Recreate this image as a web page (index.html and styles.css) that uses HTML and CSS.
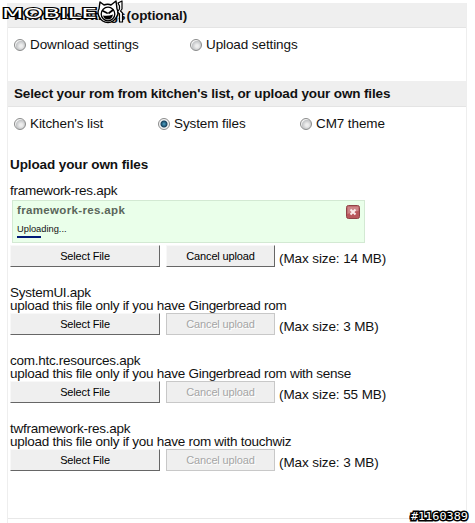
FILE: index.html
```
<!DOCTYPE html>
<html lang="en">
<head>
    <meta charset="UTF-8">
    <meta name="viewport" content="width=device-width, initial-scale=1.0">
    <title>Kitchen</title>
    <link rel="stylesheet" href="styles.css">
</head>
<body>
    <div class="container">
        <h2 class="top">Kitchen's settings (optional)</h2>
        <div class="options settings">
            <label><input type="radio" name="settings">Download settings</label>
            <label><input type="radio" name="settings">Upload settings</label>
        </div>

        <h2 class="second">Select your rom from kitchen's list, or upload your own files</h2>
        <div class="options source">
            <label><input type="radio" name="source">Kitchen's list</label>
            <label><input type="radio" name="source" checked>System files</label>
            <label><input type="radio" name="source">CM7 theme</label>
        </div>

        <div class="uploads">
            <h3>Upload your own files</h3>

            <div class="file first">
                <p>framework-res.apk</p>
                <div class="progress">
                    <div>
                        <b>framework-res.apk</b>
                        <span class="status">Uploading...</span>
                        <div class="bar"></div>
                    </div>
                    <svg class="close" width="14" height="14" viewBox="0 0 14 14">
                        <rect x="0.5" y="0.5" width="13" height="13" rx="2" fill="#b9575c" stroke="#8f4246"/>
                        <path d="M1.5 1.5h11v4.5q-5 0-11 3z" fill="#cc8588"/>
                        <path d="M4.500 4.500l5 5M9.500 4.500l-5 5" stroke="#fbecec" stroke-width="2"/>
                    </svg>
                </div>
                <div class="buttons">
                    <button class="select">Select File</button>
                    <button class="cancel">Cancel upload</button>
                    <span>(Max size: 14 MB)</span>
                </div>
            </div>

            <div class="file">
                <p>SystemUI.apk</p>
                <p>upload this file only if you have Gingerbread rom</p>
                <div class="buttons">
                    <button class="select">Select File</button>
                    <button class="cancel" disabled>Cancel upload</button>
                    <span>(Max size: 3 MB)</span>
                </div>
            </div>

            <div class="file">
                <p>com.htc.resources.apk</p>
                <p>upload this file only if you have Gingerbread rom with sense</p>
                <div class="buttons">
                    <button class="select">Select File</button>
                    <button class="cancel" disabled>Cancel upload</button>
                    <span>(Max size: 55 MB)</span>
                </div>
            </div>

            <div class="file">
                <p>twframework-res.apk</p>
                <p>upload this file only if you have rom with touchwiz</p>
                <div class="buttons">
                    <button class="select">Select File</button>
                    <button class="cancel" disabled>Cancel upload</button>
                    <span>(Max size: 3 MB)</span>
                </div>
            </div>
        </div>
    </div>

    <svg class="logo" width="126" height="26" viewBox="0 0 126 26">
        <text class="wordmark" x="2" y="17.500" textLength="95" lengthAdjust="spacingAndGlyphs">MOBILE</text>
        <!-- mascot -->
        <g stroke-linejoin="round" stroke-linecap="round">
            <path d="M100 2l4 3q4-1.500 7 0l5-4 1 8q2 4 0 7-3 6.500-9 6.500t-9-6q-2-4 0-7.500z" fill="#fff" stroke="#000" stroke-width="1.400"/>
            <circle cx="108" cy="14" r="6.800" fill="#fff" stroke="#000" stroke-width="1.300"/>
            <path d="M103 11l4 2M113 10l-4 3" fill="none" stroke="#000" stroke-width="1.800"/>
            <path d="M103 15.500q5 1 10-1-1 5-5 5t-5-4z" fill="#000"/>
            <path d="M118 3l4-2v8l-1.500 2 2 2v9h-3v-8l-2-2 2-3V6z" fill="#fff" stroke="#000" stroke-width="1.200"/>
        </g>
    </svg>

    <svg class="watermark" width="62" height="14" viewBox="0 0 62 14">
        <text x="2" y="10.500" textLength="57" lengthAdjust="spacingAndGlyphs">#1160389</text>
    </svg>
</body>
</html>
```
FILE: styles.css
```
* {
    box-sizing: border-box;
    margin: 0;
    padding: 0;
}

body {
    position: relative;
    height: 523px;
    padding: 3px 8px 0 7px;
    overflow: hidden;
    background-color: #fff;
    color: #111;
    font-family: "Liberation Sans", Arial, sans-serif;
    font-size: 13.500px;
    letter-spacing: -0.1px;
}

.container {
    height: 520px;
    border-left: 1px solid #eee;
    border-right: 1px solid #eee;
}

h2 {
    height: 25px;
    padding-left: 6px;
    border-bottom: 1px solid #e4e4e4;
    background-color: #efefef;
    font-size: 13.500px;
    line-height: 25px;
    white-space: nowrap;
}

h2.top {
    word-spacing: -2.500px;
}

h2.second {
    height: 26px;
    line-height: 26px;
    letter-spacing: -0.13px;
}

.options {
    display: grid;
    padding-left: 6px;
}

.options label {
    display: flex;
    align-items: center;
    gap: 4px;
    height: 17px;
    white-space: nowrap;
}

.settings {
    grid-template-columns: 176px auto;
    height: 53px;
    padding-top: 8px;
}

.source {
    grid-template-columns: 144px 142px auto;
    height: 48px;
    padding-top: 8px;
}

input[type="radio"] {
    appearance: none;
    width: 12px;
    height: 12px;
    border: 1px solid #8a8b8b;
    border-radius: 50%;
    background: radial-gradient(circle at 60% 60%, #eee 15%, #c4c6c8 55%, #f4f4f4 66%);
}

input[type="radio"]:checked {
    background: radial-gradient(circle, #4fa5c8 0, #17435f 3px, #f4f4f4 4px);
}

.uploads {
    height: 364px;
    padding-left: 2px;
    border-bottom: 1px solid #e8e8e8;
}

h3 {
    height: 27px;
    font-size: 13.500px;
    line-height: 20px;
}

.file {
    height: 68px;
}

.file p {
    height: 13px;
    line-height: 13px;
    letter-spacing: -0.27px;
    white-space: nowrap;
}

.file p + .buttons {
    margin-top: 1px;
}

.first {
    height: 104px;
}

.file.first p {
    height: 18px;
    line-height: 17px;
}

.progress {
    display: flex;
    justify-content: space-between;
    width: 353px;
    height: 43px;
    margin: 0 0 2px 2px;
    padding: 4px;
    border: 1px solid #d3e9d3;
    background-color: #eaffea;
    letter-spacing: 0;
}

.progress b {
    display: block;
    height: 16px;
    color: #5a665a;
    font-size: 11.500px;
    letter-spacing: 0.35px;
    line-height: 11px;
}

.status {
    display: block;
    height: 15px;
    font-size: 9.300px;
    line-height: 16px;
}

.bar {
    width: 24px;
    height: 2px;
    background-color: #001a77;
}

.buttons {
    display: flex;
    align-items: flex-start;
}

.buttons span {
    margin-left: 4px;
    line-height: 27px;
}

button {
    height: 22px;
    border: 1px solid #f8f8f8;
    border-right-color: #666;
    border-bottom-color: #666;
    background-color: #efefef;
    color: #000;
    font-family: inherit;
    font-size: 11px;
    letter-spacing: -0.15px;
}

button.select {
    width: 150px;
    margin-right: 6px;
}

button.cancel {
    width: 109px;
}

button:disabled {
    border-color: #c8c8c8;
    color: #a5a5a5;
    text-shadow: 1px 1px 0 #fff;
}

.logo {
    position: absolute;
    left: 0;
    top: 0;
}

.wordmark {
    fill: #fff;
    stroke: #000;
    stroke-width: 2px;
    paint-order: stroke;
    font-family: "DejaVu Sans", sans-serif;
    font-size: 14px;
    letter-spacing: 0;
}

.watermark {
    position: absolute;
    left: 409px;
    top: 509px;
}

.watermark text {
    fill: #fff;
    stroke: #000;
    stroke-width: 3px;
    paint-order: stroke;
    font-family: "DejaVu Sans Mono", monospace;
    font-size: 11px;
    letter-spacing: 0;
}
```
